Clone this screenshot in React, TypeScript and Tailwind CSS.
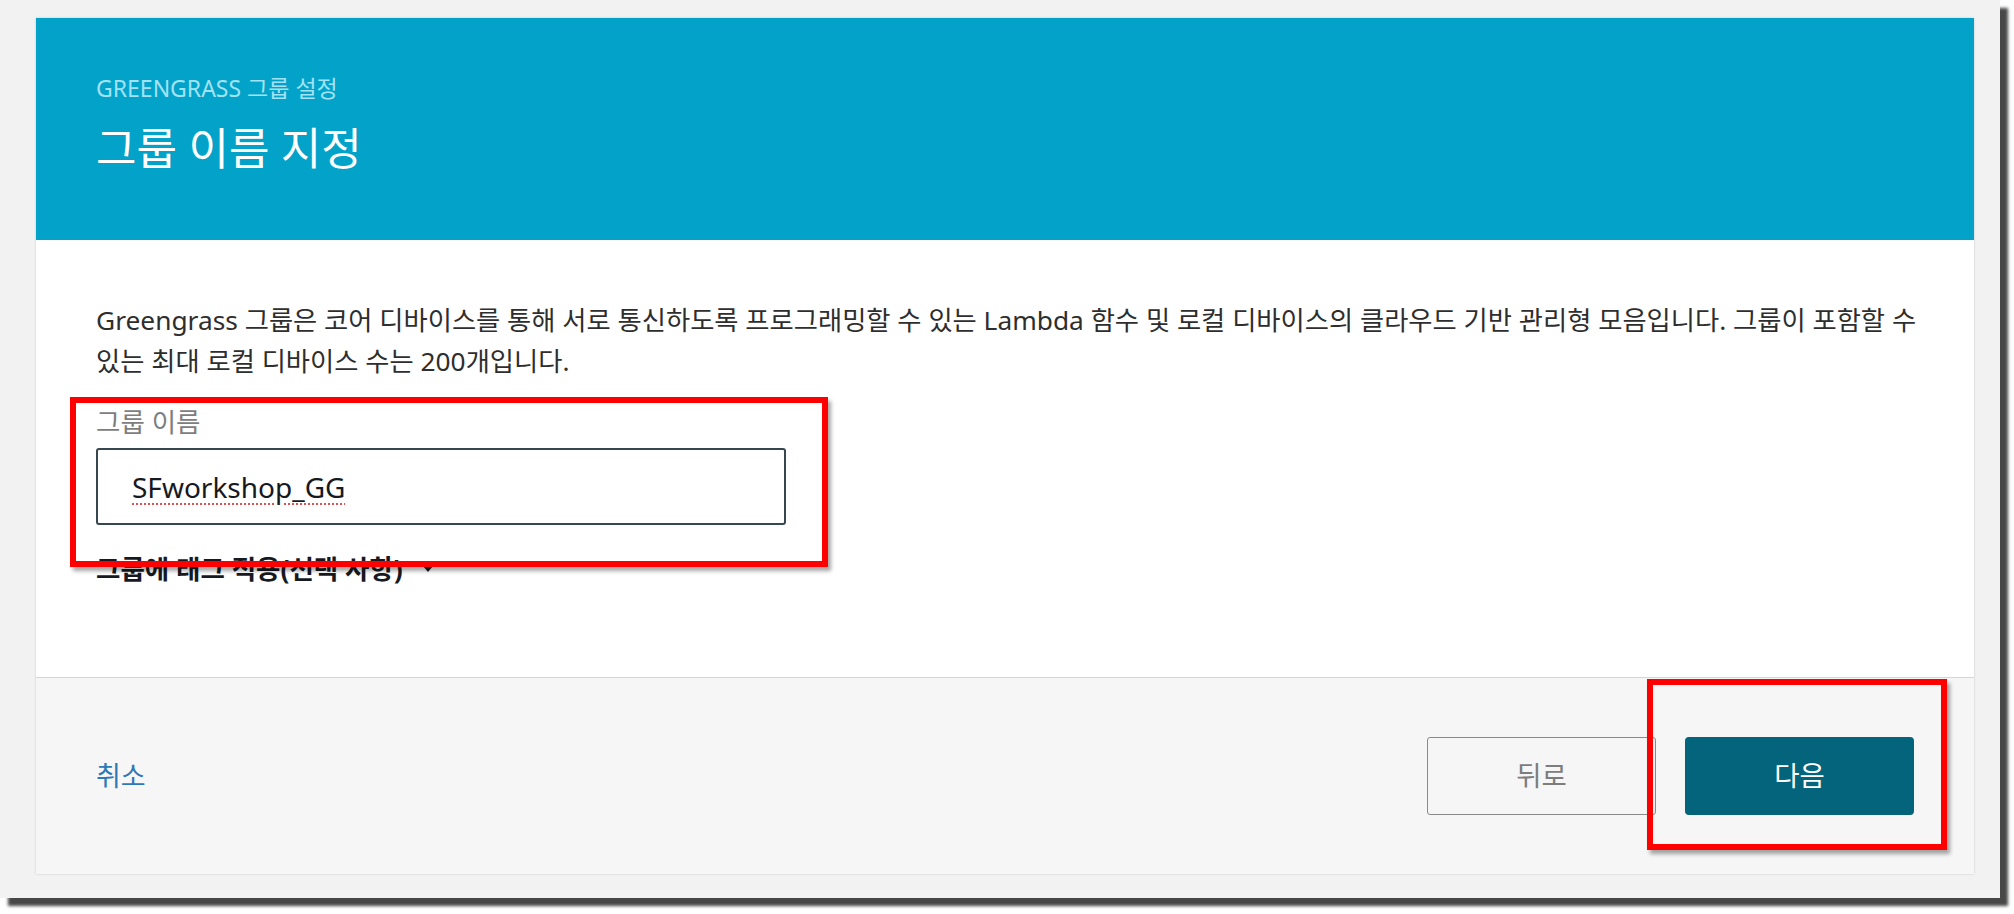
const font = "font-['Noto_Sans','Noto_Sans_CJK_KR',sans-serif]";

function RedBox({ className }: { className: string }) {
  return (
    <div
      className={`pointer-events-none absolute border-[6px] border-[#ff0000] shadow-[3px_4px_4px_rgba(0,0,0,0.35)] ${className}`}
    />
  );
}

function Header() {
  return (
    <div className="h-[222px] bg-[#02a2c9] px-[60px] pt-[55px]">
      <div className="text-[23px] leading-[30px] text-[#a3e2f3]">
        GREENGRASS 그룹 설정
      </div>
      <h1 className="mt-[19px] text-[44px] leading-[52px] text-white">
        그룹 이름 지정
      </h1>
    </div>
  );
}

function Body() {
  return (
    <div className="h-[437px] px-[60px] pt-[60px]">
      <p className="whitespace-nowrap text-[26.3px] leading-[41px] text-[#2e2e2e]">
        Greengrass 그룹은 코어 디바이스를 통해 서로 통신하도록 프로그래밍할 수
        있는 Lambda 함수 및 로컬 디바이스의 클라우드 기반 관리형 모음입니다.
        그룹이 포함할 수
        <br />
        있는 최대 로컬 디바이스 수는 200개입니다.
      </p>

      <div className="mt-[25px] text-[26.5px] leading-[30px] text-[#7e7e7e]">
        그룹 이름
      </div>
      <div className="mt-[11px] flex h-[77px] w-[690px] items-center rounded-[3px] border-2 border-[#37474f] bg-white pl-[34px] text-[28px] text-[#16191f]">
        <span className="underline decoration-[#e05050] decoration-dotted decoration-2 underline-offset-[6px]">
          SFworkshop_GG
        </span>
      </div>

      <button className="mt-[29px] flex items-center gap-[20px] text-[26.5px] font-bold leading-[30px] text-[#16191f]">
        그룹에 태그 적용(선택 사항)
        <svg width="10" height="6" viewBox="0 0 10 6">
          <path d="M0 0h10L5 6z" fill="#16191f" />
        </svg>
      </button>
    </div>
  );
}

function Footer() {
  return (
    <div className="flex h-[197px] items-center justify-between border-t border-[#d6d6d6] bg-[#f6f6f6] px-[60px]">
      <a className="text-[27px] text-[#2f78b8]">취소</a>
      <div className="flex gap-[29px]">
        <button className="h-[78px] w-[229px] rounded-[3px] border border-[#8a8a8a] text-[27.5px] text-[#7d7d7d]">
          뒤로
        </button>
        <button className="h-[78px] w-[229px] rounded-[4px] bg-[#03647b] text-[27.5px] text-white">
          다음
        </button>
      </div>
    </div>
  );
}

export default function App() {
  return (
    <div className={`min-h-screen bg-white ${font}`}>
      <div className="relative h-[898px] w-[2000px] bg-[#f2f2f2] pl-[36px] pt-[18px] shadow-[8px_8px_3px_rgba(0,0,0,0.72)]">
        <div className="w-[1938px] bg-white shadow-[0_0_2px_rgba(0,0,0,0.18)]">
          <Header />
          <Body />
          <Footer />
        </div>
        <RedBox className="left-[70px] top-[397px] h-[170px] w-[758px]" />
        <RedBox className="left-[1647px] top-[679px] h-[171px] w-[300px]" />
      </div>
    </div>
  );
}
